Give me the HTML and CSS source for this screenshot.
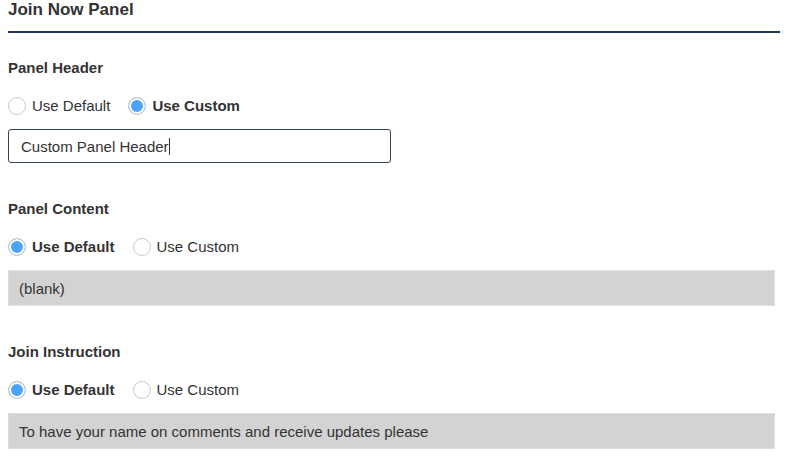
FILE: index.html
```html
<!DOCTYPE html>
<html lang="en">
<head>
    <meta charset="UTF-8">
    <meta name="viewport" content="width=device-width, initial-scale=1.0">
    <title>Join Now Panel</title>
    <link rel="stylesheet" href="styles.css">
</head>
<body>
    <h1 class="panel-title">Join Now Panel</h1>

    <div class="field">
        <div class="field-label">Panel Header</div>
        <div class="choices">
            <label class="choice"><input type="radio" name="header"> <span>Use Default</span></label>
            <label class="choice"><input type="radio" name="header" checked> <span>Use Custom</span></label>
        </div>
        <!-- editable header text, caret shown at the end -->
        <div class="text-box" contenteditable="true"><span>Custom Panel Header</span><span class="caret"></span></div>
    </div>

    <div class="field">
        <div class="field-label">Panel Content</div>
        <div class="choices">
            <label class="choice"><input type="radio" name="content" checked> <span>Use Default</span></label>
            <label class="choice"><input type="radio" name="content"> <span>Use Custom</span></label>
        </div>
        <div class="preview">(blank)</div>
    </div>

    <div class="field">
        <div class="field-label">Join Instruction</div>
        <div class="choices">
            <label class="choice"><input type="radio" name="instruction" checked> <span>Use Default</span></label>
            <label class="choice"><input type="radio" name="instruction"> <span>Use Custom</span></label>
        </div>
        <div class="preview">To have your name on comments and receive updates please</div>
    </div>
</body>
</html>
```

FILE: styles.css
```css
body{
    margin: 0 10px 0 8px;
    font-family: "Liberation Sans", Arial, sans-serif;
    font-size: 15px;
    color: #333;
    background-color: white;
}
.panel-title{
    margin: 0;
    font-size: 17px;
    line-height: 20px;
    padding-bottom: 11px;
    border-bottom: 2px solid #1f3356;
}
.field{
    margin-top: 36px;
}
.panel-title + .field{
    margin-top: 25px;
}
.field-label{
    font-weight: bold;
    line-height: 20px;
}
.choices{
    display: flex;
    gap: 18px;
    margin-top: 18px;
    margin-bottom: 13px;
    line-height: 20px;
}
.choice{
    display: flex;
    align-items: center;
    gap: 6px;
}
.choice input{
    appearance: none;
    -webkit-appearance: none;
    margin: 0;
    width: 18px;
    height: 18px;
    border-radius: 50%;
    border: 1px solid #c9c9c9;
    background-color: white;
}
.choice input:checked{
    background-color: #4da3ff;
    box-shadow: inset 0 0 0 2px white;
}
.choice input:checked + span{
    font-weight: bold;
}
.text-box{
    display: flex;
    align-items: center;
    box-sizing: border-box;
    width: 383px;
    height: 34px;
    padding: 0 12px;
    border: 1px solid #34435e;
    border-radius: 3px;
    color: #333;
    outline: none;
}
.caret{
    width: 1px;
    height: 17px;
    background-color: #333;
}
.preview{
    box-sizing: border-box;
    width: 767px;
    height: 36px;
    padding: 0 10px;
    display: flex;
    align-items: center;
    background-color: #d3d3d3;
    border: 1px solid #dedede;
}
```
